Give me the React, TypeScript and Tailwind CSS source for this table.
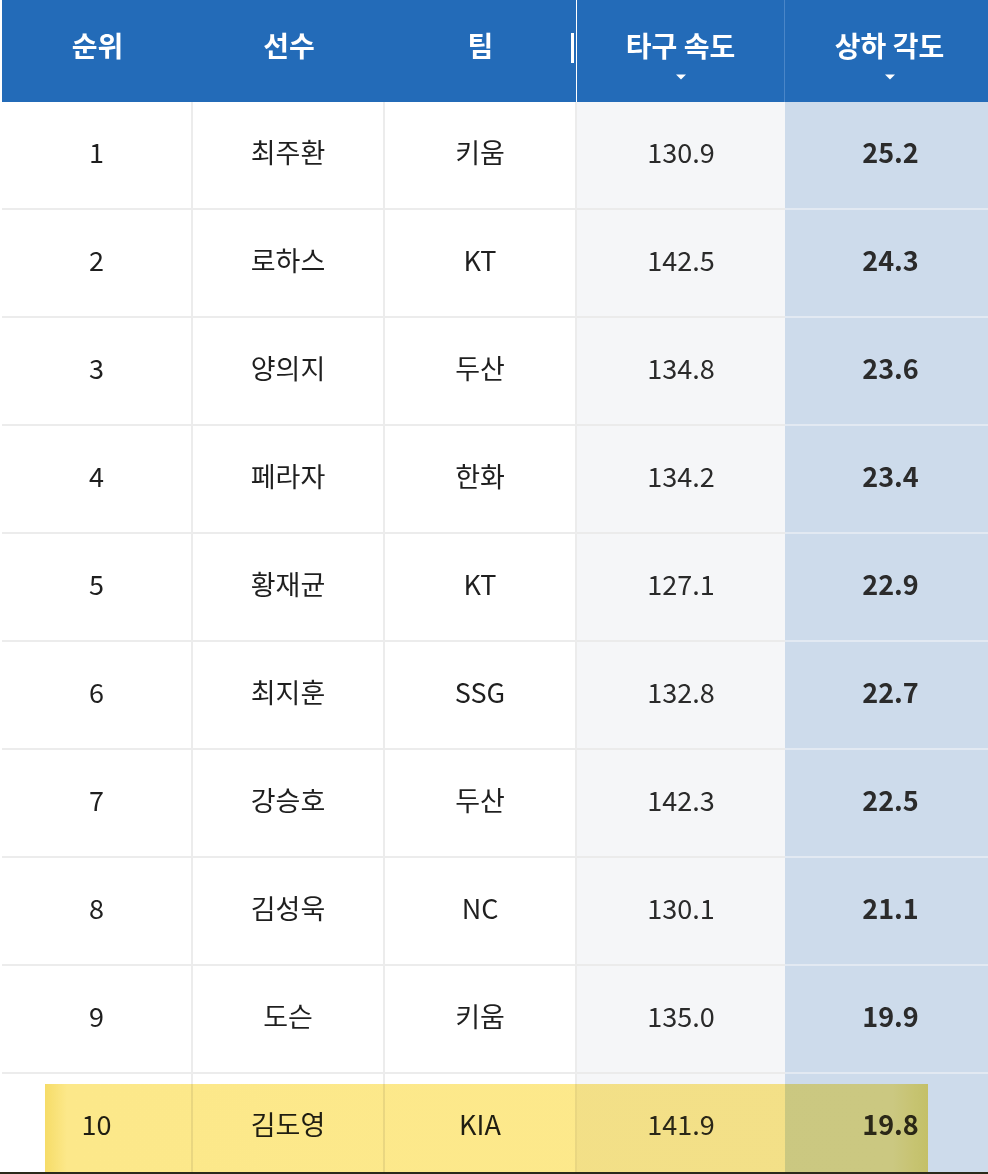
import React from "react";

const rows = [
  { rank: "1", name: "최주환", team: "키움", speed: "130.9", angle: "25.2" },
  { rank: "2", name: "로하스", team: "KT", speed: "142.5", angle: "24.3" },
  { rank: "3", name: "양의지", team: "두산", speed: "134.8", angle: "23.6" },
  { rank: "4", name: "페라자", team: "한화", speed: "134.2", angle: "23.4" },
  { rank: "5", name: "황재균", team: "KT", speed: "127.1", angle: "22.9" },
  { rank: "6", name: "최지훈", team: "SSG", speed: "132.8", angle: "22.7" },
  { rank: "7", name: "강승호", team: "두산", speed: "142.3", angle: "22.5" },
  { rank: "8", name: "김성욱", team: "NC", speed: "130.1", angle: "21.1" },
  { rank: "9", name: "도슨", team: "키움", speed: "135.0", angle: "19.9" },
  { rank: "10", name: "김도영", team: "KIA", speed: "141.9", angle: "19.8" },
];

const font = "font-['Noto_Sans_CJK_KR','Noto_Sans',sans-serif]";

function SortArrow() {
  return (
    <svg width="12" height="6" viewBox="0 0 12 6" className="mt-[10px]">
      <path d="M1 0.5 H11 L6 5.5 Z" fill="#ffffff" />
    </svg>
  );
}

export default function App() {
  return (
    <div className={`relative w-[988px] h-[1174px] overflow-hidden bg-white pl-[2px] ${font}`}>
      {/* header */}
      <div className="grid grid-cols-[191px_192px_192px_208px_203px] h-[102px] bg-[#236bb8] text-white text-[28px] font-bold">
        <div className="flex flex-col items-center pt-[26px] leading-[38px]">순위</div>
        <div className="flex flex-col items-center pt-[26px] leading-[38px]">선수</div>
        <div className="relative flex flex-col items-center pt-[26px] leading-[38px] border-r border-white">
          팀
          <div className="absolute right-[2px] top-[33px] w-[3px] h-[30px] bg-white" />
        </div>
        <div className="flex flex-col items-center pt-[26px] leading-[38px] border-r border-[#4a86c8]">
          타구 속도
          <SortArrow />
        </div>
        <div className="flex flex-col items-center pt-[26px] leading-[38px] pl-[6px]">
          상하 각도
          <SortArrow />
        </div>
      </div>

      {/* body */}
      <div className="flex flex-col text-[27px] text-[#1f1f1f]">
        {rows.map((r) => (
          <div key={r.rank} className="grid grid-cols-[191px_192px_192px_208px_203px] h-[108px]">
            <div className="flex items-center justify-center pb-[6px] border-b-2 border-r-2 border-[#ececec]">{r.rank}</div>
            <div className="flex items-center justify-center pb-[6px] border-b-2 border-r-2 border-[#ececec]">{r.name}</div>
            <div className="flex items-center justify-center pb-[6px] border-b-2 border-r-2 border-[#ececec]">{r.team}</div>
            <div className="flex items-center justify-center pb-[6px] bg-[#f5f6f8] border-b-2 border-[#ebebeb] text-[#2a2a2a]">{r.speed}</div>
            <div className="flex items-center justify-center pb-[6px] pl-[8px] bg-[#cddbeb] border-b-2 border-[#e2e9f2] font-bold text-[#2b2b2b]">{r.angle}</div>
          </div>
        ))}
      </div>

      {/* highlighter over last row */}
      <div className="absolute left-[45px] top-[1084px] w-[883px] h-[90px] mix-blend-multiply bg-[linear-gradient(90deg,#f6dc68_0%,#fce88a_2.5%,#fde98c_96%,#f4e070_100%)]" />
      <div className="absolute left-0 bottom-0 w-full h-[2px] bg-[#2a2a1a]" />
    </div>
  );
}
